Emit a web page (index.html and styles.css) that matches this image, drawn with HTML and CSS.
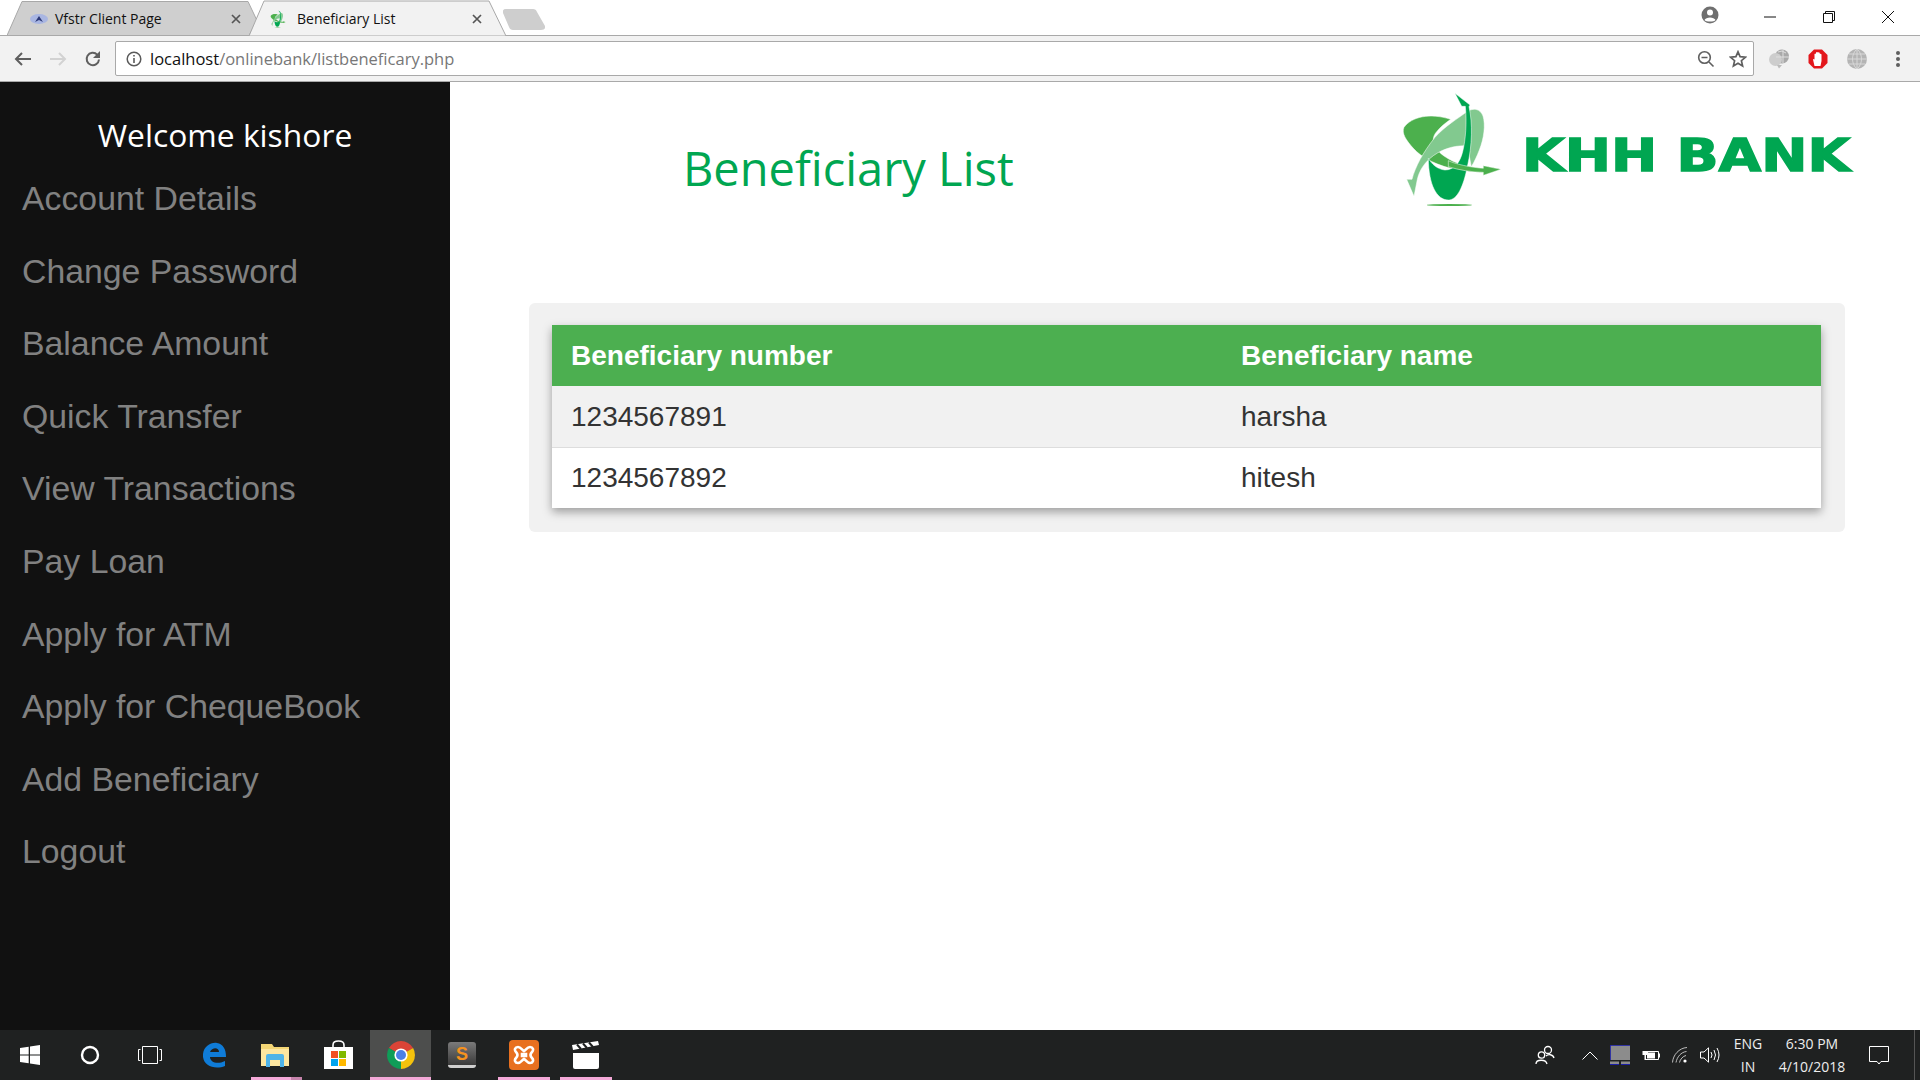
FILE: index.html
```html
<!DOCTYPE html>
<html lang="en">
<head>
<meta charset="utf-8">
<title>Beneficiary List</title>
<link rel="stylesheet" href="styles.css">
</head>
<body>
<svg class="defs" aria-hidden="true">
  <symbol id="mark" viewBox="60 0 310 355">
    <path fill="#4cb04d" stroke="#fff" stroke-width="1.5" d="M212 88C150 68 95 80 72 112C64 130 78 150 100 175C125 203 170 228 240 241C265 245 290 247 310 247L310 256L363 238L310 227L310 235C270 232 225 222 192 198C165 178 148 150 170 125C180 112 195 100 212 88Z"/>
    <path fill="#82c98f" stroke="#fff" stroke-width="1.5" d="M80 268L96 268C105 232 130 185 165 142C195 108 235 85 262 64C280 54 300 55 309 78C317 105 312 145 298 180C290 200 284 214 274 230L262 168C235 165 195 172 160 197C135 216 118 240 112 268L102 319Z"/>
    <path fill="#00a651" stroke="#fff" stroke-width="1.5" d="M225 10L270 45L267 50C278 100 277 165 262 230C250 290 232 330 205 330C170 330 146 285 145 205C155 222 172 238 195 240C222 240 240 218 248 185C257 150 261 95 256 49L245 49Z"/>
    <path fill="#4cb04d" stroke="#fff" stroke-width="1.5" d="M205 212C225 222 270 232 310 235L310 227L363 238L310 256L310 247C280 247 235 240 205 230Z"/>
    <ellipse cx="208" cy="345" rx="68" ry="3" fill="#4cb04d"/>
  </symbol>
</svg>

<header class="tabstrip">
  <div class="tab tab-back">
    <svg class="tab-shape" viewBox="0 0 250 35"><path d="M0 35L15 1H241L250 20L242 35Z"/></svg>
    <svg class="fav fav-vfstr" viewBox="0 0 18 10"><ellipse cx="9" cy="5" rx="9" ry="5" fill="#a9b6e2"/><path d="M5 8L9 2L13 8L9 6Z" fill="#2d3a78"/></svg>
    <span class="tab-title">Vfstr Client Page</span>
    <svg class="tab-close" viewBox="0 0 10 10"><path d="M1 1L9 9M9 1L1 9"/></svg>
  </div>
  <div class="tab tab-front">
    <svg class="tab-shape" viewBox="0 0 257 36"><path d="M0 36L15 1H240L257 36Z"/></svg>
    <svg class="fav fav-khh"><use href="#mark"/></svg>
    <span class="tab-title">Beneficiary List</span>
    <svg class="tab-close" viewBox="0 0 10 10"><path d="M1 1L9 9M9 1L1 9"/></svg>
  </div>
  <svg class="new-tab" viewBox="0 0 42 21"><path d="M3 0H30Q33 0 34 3L42 17Q43 21 38 21H10Q7 21 6 18L0 4Q-1 0 3 0Z"/></svg>
  <div class="win-controls">
    <span class="win-btn win-profile"><svg width="18" height="18" viewBox="0 0 18 18"><circle cx="9" cy="9" r="8.5" fill="#6f6f6f"/><circle cx="9" cy="6.5" r="3" fill="#fff"/><path d="M3.5 14C5 10.5 13 10.5 14.5 14C13 16 5 16 3.5 14Z" fill="#fff"/></svg></span>
    <span class="win-btn"><svg width="14" height="14" viewBox="0 0 14 14"><path d="M1 7H13" stroke="#111" fill="none"/></svg></span>
    <span class="win-btn"><svg width="14" height="14" viewBox="0 0 14 14"><path d="M1.5 3.5H10.5V12.5H1.5ZM3.5 3.5V1.5H12.5V10.5H10.5" stroke="#111" fill="none"/></svg></span>
    <span class="win-btn"><svg width="14" height="14" viewBox="0 0 14 14"><path d="M1 1L13 13M13 1L1 13" stroke="#111" fill="none"/></svg></span>
  </div>
</header>

<div class="toolbar">
  <span class="tool"><svg width="18" height="16" viewBox="0 0 18 16"><path d="M17 8H2M8 2L2 8L8 14" fill="none" stroke="#5f5f5f" stroke-width="2"/></svg></span>
  <span class="tool"><svg width="18" height="16" viewBox="0 0 18 16"><path d="M1 8H16M10 2L16 8L10 14" fill="none" stroke="#d2d2d2" stroke-width="2"/></svg></span>
  <span class="tool"><svg width="18" height="18" viewBox="0 0 18 18"><path d="M15 9.5A6.2 6.2 0 1 1 13.2 4.6" fill="none" stroke="#5f5f5f" stroke-width="2"/><path d="M16 1V8H9Z" fill="#5f5f5f"/></svg></span>
  <div class="omnibox">
    <svg class="info" width="16" height="16" viewBox="0 0 16 16"><circle cx="8" cy="8" r="6.8" fill="none" stroke="#5a5a5a" stroke-width="1.5"/><path d="M8 7V12M8 4V5.6" stroke="#5a5a5a" stroke-width="1.6"/></svg>
    <span class="url"><span class="host">localhost</span>/onlinebank/listbeneficary.php</span>
    <svg class="omni-icon" width="18" height="18" viewBox="0 0 18 18"><circle cx="7.5" cy="7.5" r="5.8" fill="none" stroke="#5f5f5f" stroke-width="1.6"/><path d="M4.5 7.5H10.5M12 12L16.5 16.5" stroke="#5f5f5f" stroke-width="1.6" fill="none"/></svg>
    <svg class="omni-icon star" width="18" height="18" viewBox="0 0 18 18"><path d="M9 1.8L11.1 6.7L16.4 7.2L12.4 10.7L13.6 15.9L9 13.2L4.4 15.9L5.6 10.7L1.6 7.2L6.9 6.7Z" fill="none" stroke="#5f5f5f" stroke-width="1.7"/></svg>
  </div>
  <div class="extensions">
    <span class="ext"><svg width="22" height="20" viewBox="0 0 22 20"><circle cx="14" cy="7.5" r="7" fill="#a9a9a9"/><circle cx="7.5" cy="10.5" r="6.5" fill="#cdcdcd"/><path d="M9 16L14 16L11 19.5Z" fill="#bbb"/><path d="M10 3Q14 0.5 18 4M15 1V14M8 8H21" fill="none" stroke="#dedede"/></svg></span>
    <span class="ext"><svg width="20" height="20" viewBox="0 0 20 20"><path d="M6 0.5H14L19.5 6V14L14 19.5H6L0.5 14V6Z" fill="#e3171c"/><path d="M6.5 17L5 10.5Q5.5 9.5 6.5 10.5V5Q7.5 4 8 5V3.5Q9 2.5 10 3.5V3.5Q11 3 11.8 4V5Q13 4.5 13.5 5.5V12L12.5 17Z" fill="#fff"/></svg></span>
    <span class="ext"><svg width="20" height="20" viewBox="0 0 20 20"><circle cx="10" cy="10" r="10" fill="#b4b4b4"/><path d="M0 10H20M2 5H18M2 15H18M10 0V20M10 0C4 5 4 15 10 20M10 0C16 5 16 15 10 20" fill="none" stroke="#d8d8d8"/></svg></span>
    <span class="ext ext-menu"><svg width="6" height="18" viewBox="0 0 6 18"><circle cx="3" cy="3" r="2" fill="#5f5f5f"/><circle cx="3" cy="9" r="2" fill="#5f5f5f"/><circle cx="3" cy="15" r="2" fill="#5f5f5f"/></svg></span>
  </div>
</div>

<div class="page">
  <aside class="sidebar">
    <h2 class="welcome">Welcome kishore</h2>
    <nav class="menu">
      <a href="#">Account Details</a>
      <a href="#">Change Password</a>
      <a href="#">Balance Amount</a>
      <a href="#">Quick Transfer</a>
      <a href="#">View Transactions</a>
      <a href="#">Pay Loan</a>
      <a href="#">Apply for ATM</a>
      <a href="#">Apply for ChequeBook</a>
      <a href="#">Add Beneficiary</a>
      <a href="#">Logout</a>
    </nav>
  </aside>
  <main class="content">
    <div class="content-head">
      <h1 class="page-title">Beneficiary List</h1>
      <svg class="logo" viewBox="0 6 1500 414" role="img" aria-label="KHH BANK">
        <g transform="translate(0 30)">
          <use href="#mark" x="60" y="0" width="310" height="355"/>
        </g>
        <text class="logo-text" x="426" y="272" textLength="985" lengthAdjust="spacingAndGlyphs">KHH BANK</text>
      </svg>
    </div>
    <section class="panel">
      <table class="list">
        <thead>
          <tr><th class="col-number">Beneficiary number</th><th>Beneficiary name</th></tr>
        </thead>
        <tbody>
          <tr><td>1234567891</td><td>harsha</td></tr>
          <tr><td>1234567892</td><td>hitesh</td></tr>
        </tbody>
      </table>
    </section>
  </main>
</div>

<footer class="taskbar">
  <span class="slot s60"><svg width="20" height="20" viewBox="0 0 20 20"><path d="M0 3L8.7 1.7V9.5H0ZM10 1.5L20 0V9.5H10ZM0 10.5H8.7V18.3L0 17ZM10 10.5H20V20L10 18.5Z" fill="#fff"/></svg></span>
  <span class="slot s60"><svg width="20" height="20" viewBox="0 0 20 20"><circle cx="10" cy="10" r="8" fill="none" stroke="#fff" stroke-width="2.4"/></svg></span>
  <span class="slot s60 gap-after"><svg width="24" height="18" viewBox="0 0 24 18"><path d="M4.5 .5H19.5V17.5H4.5Z" fill="none" stroke="#fff"/><path d="M2.5 3.5H.5V14.5H2.5M21.5 3.5H23.5V14.5H21.5" fill="none" stroke="#fff"/></svg></span>
  <span class="slot s61"><svg width="24" height="26" viewBox="0 0 24 26"><path d="M1 12C2 4 9 0 15 1C21 2 24 7 24 15H8C8 20 15 23 23 19V24C13 28 2 24 1 15ZM8 10H17C17 5 10 5 8 10Z" fill="#0f7cd8"/></svg></span>
  <span class="slot s62 pinned-multi"><svg width="28" height="24" viewBox="0 0 28 24"><path d="M0 1H11L13 4H28V23H0Z" fill="#f3d675"/><path d="M0 6H28V23H0Z" fill="#fde6a0"/><path d="M5 24V13Q5 11 7 11H21Q23 11 23 13V24H19V17H9V24Z" fill="#4fb3e8"/></svg></span>
  <span class="slot s64"><svg width="29" height="30" viewBox="0 0 29 30"><path d="M9 8V5Q9 1 14.5 1Q20 1 20 5V8" fill="none" stroke="#fff" stroke-width="1.6"/><path d="M0 7H29V29H0Z" fill="#fff"/><path d="M7 11H14V18H7Z" fill="#f25022"/><path d="M15 11H22V18H15Z" fill="#7fba00"/><path d="M7 19H14V26H7Z" fill="#00a4ef"/><path d="M15 19H22V26H15Z" fill="#ffb900"/></svg></span>
  <span class="slot s61 active pinned"><svg width="28" height="28" viewBox="0 0 28 28"><path d="M14 14L1.9 7A14 14 0 0 1 26.1 7Z" fill="#db4437"/><path d="M14 14L26.1 7A14 14 0 0 1 14 28Z" fill="#f4c20d"/><path d="M14 14L14 28A14 14 0 0 1 1.9 7Z" fill="#0f9d58"/><circle cx="14" cy="14" r="6.6" fill="#fff"/><circle cx="14" cy="14" r="5" fill="#4c7fe8"/></svg></span>
  <span class="slot s62"><span class="sublime"><span class="sublime-s">S</span></span></span>
  <span class="slot s62 pinned"><span class="xampp"><svg width="22" height="22" viewBox="0 0 22 22"><path d="M5 3C2 3 1 6 3 8C5 10 5 12 3 14C1 16 2 19 5 19C8 19 9 16 11 15C13 16 14 19 17 19C20 19 21 16 19 14C17 12 17 10 19 8C21 6 20 3 17 3C14 3 13 6 11 7C9 6 8 3 5 3ZM9 10H13V12H9Z" fill="none" stroke="#fff" stroke-width="2.6"/></svg></span></span>
  <span class="slot s62 pinned"><svg width="28" height="28" viewBox="0 0 28 28"><path d="M0 4L26 0L27 4L1 9Z" fill="#fff"/><path d="M5 3.5L9 8M11 2.5L15 7M17 1.5L21 6" stroke="#1f2121" stroke-width="2"/><path d="M1 12H27V26Q27 28 25 28H3Q1 28 1 26Z" fill="#fff"/></svg></span>

  <div class="tray">
    <span class="tray-item w40"><svg width="20" height="20" viewBox="0 0 20 20"><circle cx="13" cy="5" r="3.5" fill="none" stroke="#fff" stroke-width="1.3"/><circle cx="6.5" cy="10" r="3.2" fill="none" stroke="#fff" stroke-width="1.3"/><path d="M1 19C1 14 11 14 12 19M11 11C13 9 18 9 19 13" fill="none" stroke="#fff" stroke-width="1.3"/></svg></span>
    <span class="tray-item w30"><svg width="16" height="9" viewBox="0 0 16 9"><path d="M.5 8.5L8 1L15.5 8.5" fill="none" stroke="#fff"/></svg></span>
    <span class="tray-item w30"><svg width="20" height="20" viewBox="0 0 20 20"><path d="M0 0H20V15H0Z" fill="#8c8c8c"/><path d="M0 .5H20M.5 0V15" stroke="#1a1ea8" stroke-width=".8"/><path d="M0 16.5H9V20H0ZM11 16.5H20V20H11Z" fill="#8c8c8c"/><path d="M0 19.5H9M11 19.5H20" stroke="#1a1ea8"/></svg></span>
    <span class="tray-item w30"><svg width="20" height="12" viewBox="0 0 20 12"><path d="M4 2V0M6.5 2V0M2.5 2H8V6H6V11H4.5V6H2.5Z" fill="#fff"/><path d="M6 2.5H18.5V10.5H6" fill="none" stroke="#fff"/><path d="M7 3.5H15V9.5H7Z" fill="#fff"/><path d="M19 4.5H20V8.5H19Z" fill="#fff"/></svg></span>
    <span class="tray-item w30"><svg width="16" height="16" viewBox="0 0 16 16"><path d="M.5 15.5C1 8 7 1 15 .5M4 15.5C5 10 9 5 14.5 4.5M7.5 15.5C8 12.5 11 9 14 8.5" fill="none" stroke="#cfcfcf" stroke-width=".9"/><circle cx="13" cy="14" r="1.6" fill="#fff"/></svg></span>
    <span class="tray-item w30"><svg width="20" height="16" viewBox="0 0 20 16"><path d="M.5 5H4L8.5 .8V15.2L4 11H.5Z" fill="none" stroke="#fff"/><path d="M11 5Q13 8 11 11M14 3Q17 8 14 13M17 1Q21 8 17 15" fill="none" stroke="#fff"/></svg></span>
    <span class="tray-text w46">ENG<br>IN</span>
    <span class="tray-text w82">6:30 PM<br>4/10/2018</span>
    <span class="tray-item w52"><svg width="20" height="19" viewBox="0 0 20 19"><path d="M.5 .5H19.5V15.5H12L10 18L8 15.5H.5Z" fill="none" stroke="#fff"/></svg></span>
    <span class="show-desktop"></span>
  </div>
</footer>
</body>
</html>
```

FILE: styles.css
```css
* { box-sizing: border-box; }
html, body { margin: 0; height: 100%; }
body {
  display: flex;
  flex-direction: column;
  height: 1080px;
  overflow: hidden;
  background: #fff;
  font-family: "Liberation Sans", Arial, sans-serif;
}
.defs { position: absolute; width: 0; height: 0; }

/* Tab strip */
.tabstrip {
  height: 35px;
  flex: none;
  display: flex;
  padding-left: 7px;
  background: #fff;
  font-family: "Open Sans", "Noto Sans", sans-serif;
  font-size: 14px;
  color: #111;
}
.tab {
  position: relative;
  flex: none;
  display: flex;
  align-items: center;
  height: 36px;
}
.tab-shape { position: absolute; left: 0; top: 0; height: 36px; }
.tab-shape path { stroke: #a8a8a8; stroke-width: 1; }
.tab-back { width: 250px; z-index: 0; padding-top: 1px; }
.tab-back .tab-shape { width: 250px; }
.tab-back .tab-shape path { fill: #cfcfcf; }
.tab-front { width: 257px; margin-left: -8px; z-index: 1; padding-top: 1px; }
.tab-front .tab-shape { width: 257px; }
.tab-front .tab-shape path { fill: #f2f2f2; }
.fav { position: relative; flex: none; }
.fav-vfstr { width: 18px; height: 10px; margin-left: 23px; }
.fav-khh { width: 18px; height: 18px; margin-left: 20px; }
.tab-title { position: relative; flex: 1; }
.tab-back .tab-title { margin-left: 7px; }
.tab-front .tab-title { margin-left: 10px; }
.tab-close { position: relative; flex: none; width: 10px; height: 10px; fill: none; stroke: #555; stroke-width: 1.7; }
.tab-back .tab-close { margin-right: 16px; }
.tab-front .tab-close { margin-right: 24px; }
.new-tab { flex: none; width: 42px; height: 21px; margin: 9px 0 0 -3px; fill: #cecece; }
.win-controls { margin-left: auto; display: flex; padding-right: 3px; }
.win-btn { width: 59px; height: 33px; display: flex; align-items: center; justify-content: center; }
.win-profile { width: 60px; height: 30px; }

/* Toolbar */
.toolbar {
  position: relative;
  z-index: 0;
  flex: none;
  height: 47px;
  display: flex;
  align-items: center;
  padding: 0 0 0 5px;
  background: #f2f2f2;
  border-top: 1px solid #a9a9a9;
  border-bottom: 1px solid #a9a9a9;
}
.tool { width: 35px; display: flex; justify-content: center; }
.omnibox {
  flex: 1;
  height: 35px;
  margin-left: 5px;
  display: flex;
  align-items: center;
  padding: 0 6px 0 10px;
  background: #fff;
  border: 1px solid #a9a9a9;
  border-radius: 2px;
}
.info { flex: none; }
.url {
  flex: 1;
  margin-left: 8px;
  font-family: "Open Sans", "Noto Sans", sans-serif;
  font-size: 16.5px;
  color: #777;
}
.host { color: #111; }
.omni-icon { flex: none; }
.star { margin-left: 14px; }
.extensions { display: flex; margin-left: 5px; }
.ext { width: 39px; display: flex; justify-content: center; align-items: center; }
.ext-menu { width: 44px; }

/* Page */
.page { flex: 1; min-height: 0; display: flex; }
.sidebar { width: 450px; flex: none; background: #111; padding-top: 29px; }
.welcome {
  margin: 0;
  text-align: center;
  color: #fff;
  font-family: "Open Sans", "Noto Sans", sans-serif;
  font-weight: 400;
  font-size: 31.8px;
  line-height: 48px;
}
.menu { margin-top: 3px; }
.menu a {
  display: block;
  padding-left: 22px;
  height: 72.6px;
  line-height: 72.6px;
  font-size: 33.8px;
  color: #818181;
  text-decoration: none;
}
.content { flex: 1; min-width: 0; display: flex; flex-direction: column; }
.content-head { height: 221px; flex: none; display: flex; align-items: flex-start; }
.page-title {
  margin: 56px 0 0 233px;
  font-family: "Open Sans", "Noto Sans", sans-serif;
  font-weight: 400;
  font-size: 47px;
  line-height: 60px;
  color: #00a651;
}
.logo { margin-left: auto; margin-right: 40px; width: 500px; height: 138px; flex: none; }
.logo-text { font-family: "DejaVu Sans", sans-serif; font-weight: 700; font-size: 133px; fill: #00a651; stroke: #00a651; stroke-width: 4px; }

.panel {
  margin: 0 75px 0 79px;
  padding: 22px 24px 26px 23px;
  height: 229px;
  background: #f1f1f1;
  border-radius: 6px;
}
.list {
  width: 100%;
  border-collapse: collapse;
  background: #fff;
  box-shadow: 0 4px 9px rgba(0, 0, 0, .35);
  font-size: 28px;
  color: #333;
}
.list th, .list td { height: 61px; padding: 0 19px; text-align: left; }
.list td { padding-top: 1px; }
.list th { background: #4caf50; color: #fff; font-weight: 700; }
.col-number { width: 670px; }
.list td { border-bottom: 1px solid #ddd; }
.list tbody tr:first-child { background: #f1f1f1; }
.list tbody tr:last-child td { border-bottom: 0; }

/* Taskbar */
.taskbar {
  flex: none;
  height: 50px;
  display: flex;
  background: #1f2121;
  color: #fff;
  font-family: "Open Sans", "Noto Sans", sans-serif;
}
.slot { position: relative; flex: none; height: 50px; display: flex; align-items: center; justify-content: center; }
.s60 { width: 60px; }
.s61 { width: 61px; }
.s62 { width: 62px; }
.s64 { width: 64px; }
.gap-after { margin-right: 3px; }
.active { background: #4d4e4d; }
.pinned::after, .pinned-multi::after {
  content: "";
  position: absolute;
  bottom: 0;
  height: 3px;
  background: #f4a9d8;
  left: 5px;
  right: 5px;
}
.active::after { left: 0; right: 0; }
.pinned-multi::after { left: 7px; right: 4px; background: linear-gradient(90deg, #f4a9d8 78%, #c684ac 78%); }
.sublime {
  width: 28px;
  height: 26px;
  border-radius: 3px;
  background: linear-gradient(#7a7a7a, #3a3a3a);
  border-bottom: 3px solid #cfcfcf;
  display: flex;
  align-items: center;
  justify-content: center;
}
.sublime-s { font: 700 18px/1 "Liberation Sans", sans-serif; color: #f5921e; }
.xampp {
  width: 30px;
  height: 30px;
  border-radius: 4px;
  background: #e8701f;
  display: flex;
  align-items: center;
  justify-content: center;
}
.tray { margin-left: auto; display: flex; align-items: center; height: 50px; }
.tray-item { flex: none; display: flex; align-items: center; justify-content: center; height: 50px; }
.tray-text {
  flex: none;
  font-size: 14px;
  line-height: 23px;
  text-align: center;
  color: #eee;
}
.w30 { width: 30px; }
.w40 { width: 40px; margin-right: 10px; }
.w46 { width: 46px; }
.w52 { width: 52px; }
.w82 { width: 82px; }
.show-desktop { width: 6px; height: 50px; margin-left: 9px; border-left: 1px solid #555; }
```
